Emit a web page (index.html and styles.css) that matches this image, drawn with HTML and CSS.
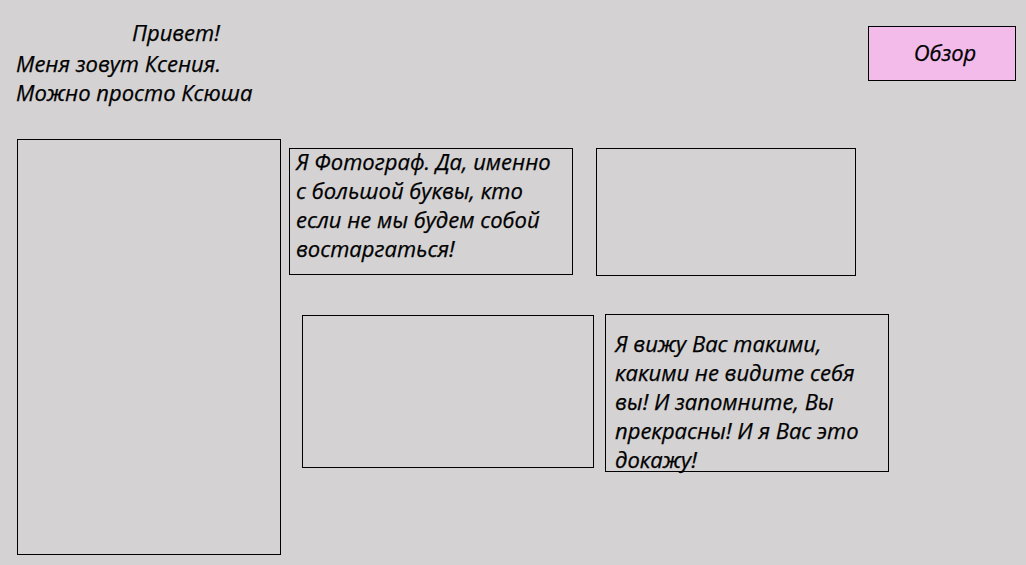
FILE: index.html
```html
<!DOCTYPE html>
<html lang="ru">
<head>
<meta charset="utf-8">
<title>Ксения — фотограф</title>
<link rel="stylesheet" href="styles.css">
</head>
<body>
<div class="page">
  <header class="top">
    <div class="greeting">
      <p class="line hello">Привет!</p>
      <p class="line">Меня зовут Ксения.</p>
      <p class="line">Можно просто Ксюша</p>
    </div>
    <button class="btn">Обзор</button>
  </header>
  <main class="content">
    <div class="tall"></div>
    <div class="cards">
      <div class="row row1">
        <div class="card c1"><p class="text">Я Фотограф. Да, именно<br>с большой буквы, кто<br>если не мы будем собой<br>востаргаться!</p></div>
        <div class="card c2"></div>
      </div>
      <div class="row row2">
        <div class="card c3"></div>
        <div class="card c4"><p class="text">Я вижу Вас такими,<br>какими не видите себя<br>вы! И запомните, Вы<br>прекрасны! И я Вас это<br>докажу!</p></div>
      </div>
    </div>
  </main>
</div>
</body>
</html>
```
FILE: styles.css
```css
* { box-sizing: border-box; }
html, body { margin: 0; padding: 0; }
body {
  background: #d4d2d3;
  color: #000;
  font-family: "Open Sans", "Noto Sans", sans-serif;
  font-style: italic;
  font-size: 22px;
  -webkit-text-stroke: 0.25px #000;
  width: 1026px;
  height: 565px;
  overflow: hidden;
}
.page { width: 1026px; }
.top {
  height: 139px;
  display: flex;
  justify-content: space-between;
  align-items: flex-start;
}
.greeting {
  padding-top: 18px;
  padding-left: 16px;
}
.line {
  margin: 0;
  line-height: 29px;
  white-space: nowrap;
}
.hello {
  margin-left: 116px;
  margin-bottom: 2px;
}
.btn {
  margin-top: 26px;
  margin-right: 10px;
  width: 148px;
  height: 55px;
  border: 1px solid #000;
  background: #f2bbea;
  font: inherit;
  color: #000;
  padding: 0 0 4px 6px;
  cursor: pointer;
}
.content {
  display: flex;
  align-items: flex-start;
  padding-left: 17px;
}
.tall {
  width: 264px;
  height: 416px;
  border: 1px solid #000;
}
.cards {
  margin-left: 8px;
  display: flex;
  flex-direction: column;
}
.row {
  display: flex;
  align-items: flex-start;
}
.row1 { margin-top: 9px; gap: 23px; }
.row2 { margin-top: 38px; margin-left: 13px; gap: 11px; }
.card { border: 1px solid #000; }
.c1 { width: 284px; height: 127px; padding: 0 0 0 6px; }
.c2 { width: 260px; height: 128px; }
.c3 { width: 292px; height: 153px; margin-top: 1px; }
.c4 { width: 284px; height: 158px; padding: 14px 0 0 9px; }
.text {
  margin: 0;
  line-height: 29px;
  white-space: nowrap;
}
.c1 .text { margin-top: -2px; }
```
